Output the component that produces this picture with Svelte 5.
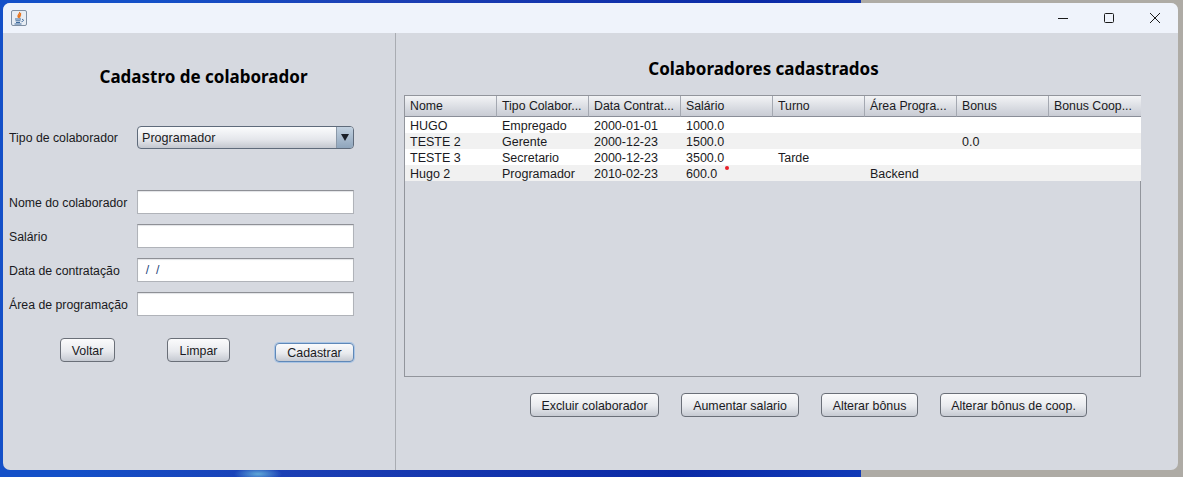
<script>
  const columns = ['Nome', 'Tipo Colabor...', 'Data Contrat...', 'Salário', 'Turno', 'Área Progra...', 'Bonus', 'Bonus Coop...'];
  const rows = [
    ['HUGO', 'Empregado', '2000-01-01', '1000.0', '', '', '', ''],
    ['TESTE 2', 'Gerente', '2000-12-23', '1500.0', '', '', '0.0', ''],
    ['TESTE 3', 'Secretario', '2000-12-23', '3500.0', 'Tarde', '', '', ''],
    ['Hugo 2', 'Programador', '2010-02-23', '600.0', '', 'Backend', '', '']
  ];
  const fields = [
    { label: 'Nome do colaborador', value: '' },
    { label: 'Salário', value: '' },
    { label: 'Data de contratação', value: '  /  /' },
    { label: 'Área de programação', value: '' }
  ];
  const actions = ['Excluir colaborador', 'Aumentar salario', 'Alterar bônus', 'Alterar bônus de coop.'];
</script>

<div class="desktop">
  <div class="window">
    <header class="titlebar">
      <svg class="java" width="16" height="16" viewBox="0 0 16 16" aria-hidden="true">
        <rect x="0.5" y="0.5" width="15" height="15" rx="1.5" fill="#e8edf4" stroke="#7f8fa3" />
        <path d="M8.500 2c1 1.500-2 2.500-1.500 4.500.2.800.8 1 .8 1-.8-1.500 2.500-2.800 1.800-4.500M10 4.500c-1 .8-1.500 1.500-1 3" fill="none" stroke="#e8731c" stroke-width="1.200" />
        <path d="M4 9h6M4.500 10.800h5M5 12.500h4M3.500 14h7M11 9.500c2-.5 2 2-.5 2.200" fill="none" stroke="#3f6a9c" stroke-width="1" />
      </svg>
      <div class="controls">
        <svg width="10" height="10" viewBox="0 0 10 10" aria-hidden="true"><path d="M0 5.500h10" stroke="#1a1a1a" /></svg>
        <svg width="10" height="10" viewBox="0 0 10 10" aria-hidden="true"><rect x="0.5" y="0.5" width="9" height="9" rx="1" fill="none" stroke="#1a1a1a" /></svg>
        <svg width="10" height="10" viewBox="0 0 10 10" aria-hidden="true"><path d="M0 0l10 10M10 0L0 10" stroke="#1a1a1a" /></svg>
      </div>
    </header>

    <main class="content">
      <section class="left">
        <h1>Cadastro de colaborador</h1>
        <div class="type-row">
          <span class="label">Tipo de colaborador</span>
          <div class="combo">
            <span class="combo-text">Programador</span>
            <span class="combo-arrow"><i></i></span>
          </div>
        </div>
        <div class="fields">
          {#each fields as f}
            <div class="field-row">
              <span class="label">{f.label}</span>
              <div class="input">{f.value}</div>
            </div>
          {/each}
        </div>
        <div class="form-buttons">
          <button class="btn voltar">Voltar</button>
          <button class="btn limpar">Limpar</button>
          <button class="btn cadastrar">Cadastrar</button>
        </div>
      </section>

      <section class="right">
        <h2>Colaboradores cadastrados</h2>
        <div class="table-box">
          <table>
            <thead>
              <tr>
                {#each columns as c}
                  <th>{c}</th>
                {/each}
              </tr>
            </thead>
            <tbody>
              {#each rows as row}
                <tr>
                  {#each row as cell}
                    <td>{cell}</td>
                  {/each}
                </tr>
              {/each}
            </tbody>
          </table>
          <span class="dot"></span>
        </div>
        <div class="actions">
          {#each actions as a}
            <button class="btn action">{a}</button>
          {/each}
        </div>
      </section>
    </main>
  </div>
</div>

<style>
  :global(body) {
    margin: 0;
    overflow: hidden;
  }

  .desktop {
    width: 1183px;
    height: 477px;
    padding: 3px 5px 7px 3px;
    box-sizing: border-box;
    background:
      linear-gradient(to right, transparent 861px, #aeaba5 861px),
      radial-gradient(ellipse 24px 7px at 258px 474px, #5fa8d8, transparent),
      linear-gradient(100deg, #1450c8 0 12%, #1c3fb4 30%, #0b2aa6 60%, #1a56d6 100%);
    font-family: "Liberation Sans", Arial, sans-serif;
    font-size: 12.3px;
    color: #1a1a22;
  }

  .window {
    height: 467px;
    display: flex;
    flex-direction: column;
    background: #d6d9e0;
    border-radius: 7px;
    overflow: hidden;
  }

  .titlebar {
    height: 30px;
    flex: none;
    display: flex;
    align-items: center;
    justify-content: space-between;
    padding: 0 18px 0 8px;
    background: #eff3fb;
  }

  .java {
    display: block;
    margin-top: -1px;
  }

  .controls {
    display: flex;
    gap: 36px;
    margin-top: -1px;
  }

  .controls svg {
    display: block;
  }

  .content {
    flex: 1;
    display: flex;
  }

  .left {
    width: 393px;
    flex: none;
    box-sizing: border-box;
    padding: 32px 0 0 6px;
    border-right: 1px solid #a9acb2;
  }

  h1, h2 {
    margin: 0;
    font-family: "Noto Sans", sans-serif;
    font-size: 17px;
    line-height: 24px;
    font-weight: 700;
    color: #000;
    text-align: center;
  }

  h1 {
    width: 389px;
  }

  .label {
    width: 128px;
    flex: none;
    white-space: nowrap;
  }

  .field-row .label {
    padding-top: 2px;
  }

  .type-row,
  .field-row {
    display: flex;
    align-items: center;
  }

  .type-row {
    margin-top: 37px;
    height: 23px;
  }

  .combo {
    width: 217px;
    height: 23px;
    box-sizing: border-box;
    display: flex;
    border: 1px solid #5f6b7b;
    border-radius: 4px;
    overflow: hidden;
    background: linear-gradient(to bottom, #fbfcfd, #e4e6eb 60%, #c3c7cf);
  }

  .combo-text {
    flex: 1;
    padding: 1px 0 0 4px;
    line-height: 21px;
    font-size: 12.6px;
  }

  .combo-arrow {
    width: 16px;
    display: flex;
    align-items: center;
    justify-content: center;
    background: linear-gradient(to bottom, #c2d1e0, #8fa5bc);
    border-left: 1px solid #8a98a8;
  }

  .combo-arrow i {
    border: 4px solid transparent;
    border-top: 7px solid #1a1f28;
    border-bottom: 0;
  }

  .fields {
    margin-top: 41px;
    display: flex;
    flex-direction: column;
    gap: 10px;
  }

  .input {
    width: 217px;
    height: 24px;
    box-sizing: border-box;
    border: 1px solid #b0b3b9;
    border-top-color: #8e9096;
    background: #fff;
    box-shadow: inset 0 1px 1px #e2e3e6;
    padding-left: 1px;
    line-height: 22px;
    white-space: pre;
    color: #26467a;
  }

  .btn {
    height: 24px;
    padding: 1px 0 0;
    box-sizing: border-box;
    border: 1px solid #6a6f78;
    border-radius: 4px;
    background: linear-gradient(to bottom, #fbfbfc, #e8eaee 55%, #c6cad2);
    font: inherit;
    font-size: 12.4px;
    color: inherit;
  }

  .form-buttons {
    margin-top: 22px;
    display: flex;
    align-items: flex-start;
  }

  .voltar {
    width: 55px;
    margin-left: 51px;
  }

  .limpar {
    width: 63px;
    margin-left: 52px;
  }

  .cadastrar {
    width: 79px;
    height: 19px;
    margin: 5px 0 0 45px;
    border-color: #5f88b8;
    box-shadow: 0 0 0 1px #a9c4e4;
    line-height: 17px;
  }

  .right {
    flex: 1;
    padding: 24px 0 0 8px;
  }

  h2 {
    width: 719px;
  }

  .table-box {
    position: relative;
    width: 737px;
    height: 282px;
    box-sizing: border-box;
    margin-top: 14px;
    border: 1px solid #92959c;
  }

  table {
    width: 735px;
    table-layout: fixed;
    border-collapse: separate;
    border-spacing: 0;
  }

  th {
    width: 92px;
    height: 21px;
    padding: 0 0 0 5px;
    box-sizing: border-box;
    text-align: left;
    font-weight: 400;
    white-space: nowrap;
    border-right: 1px solid #a4a8b1;
    border-bottom: 1px solid #8a8e98;
    background: linear-gradient(to bottom, #f3f4f6, #d4d7de 70%, #c9ccd4);
  }

  th:last-child {
    border-right: 0;
  }

  td {
    height: 16px;
    box-sizing: border-box;
    padding: 2px 0 0 5px;
    line-height: 14px;
    white-space: nowrap;
    font-size: 12.5px;
    background: #fff;
  }

  tbody tr:nth-child(even) td {
    background: #f1f1f1;
  }

  .dot {
    position: absolute;
    left: 320px;
    top: 70px;
    width: 4px;
    height: 4px;
    border-radius: 50%;
    background: #e8202a;
  }

  .actions {
    margin: 16px 0 0 126px;
    display: flex;
    gap: 22px;
  }

  .action:nth-child(1) { width: 129px; }
  .action:nth-child(2) { width: 118px; }
  .action:nth-child(3) { width: 97px; }
  .action:nth-child(4) { width: 147px; }
</style>
